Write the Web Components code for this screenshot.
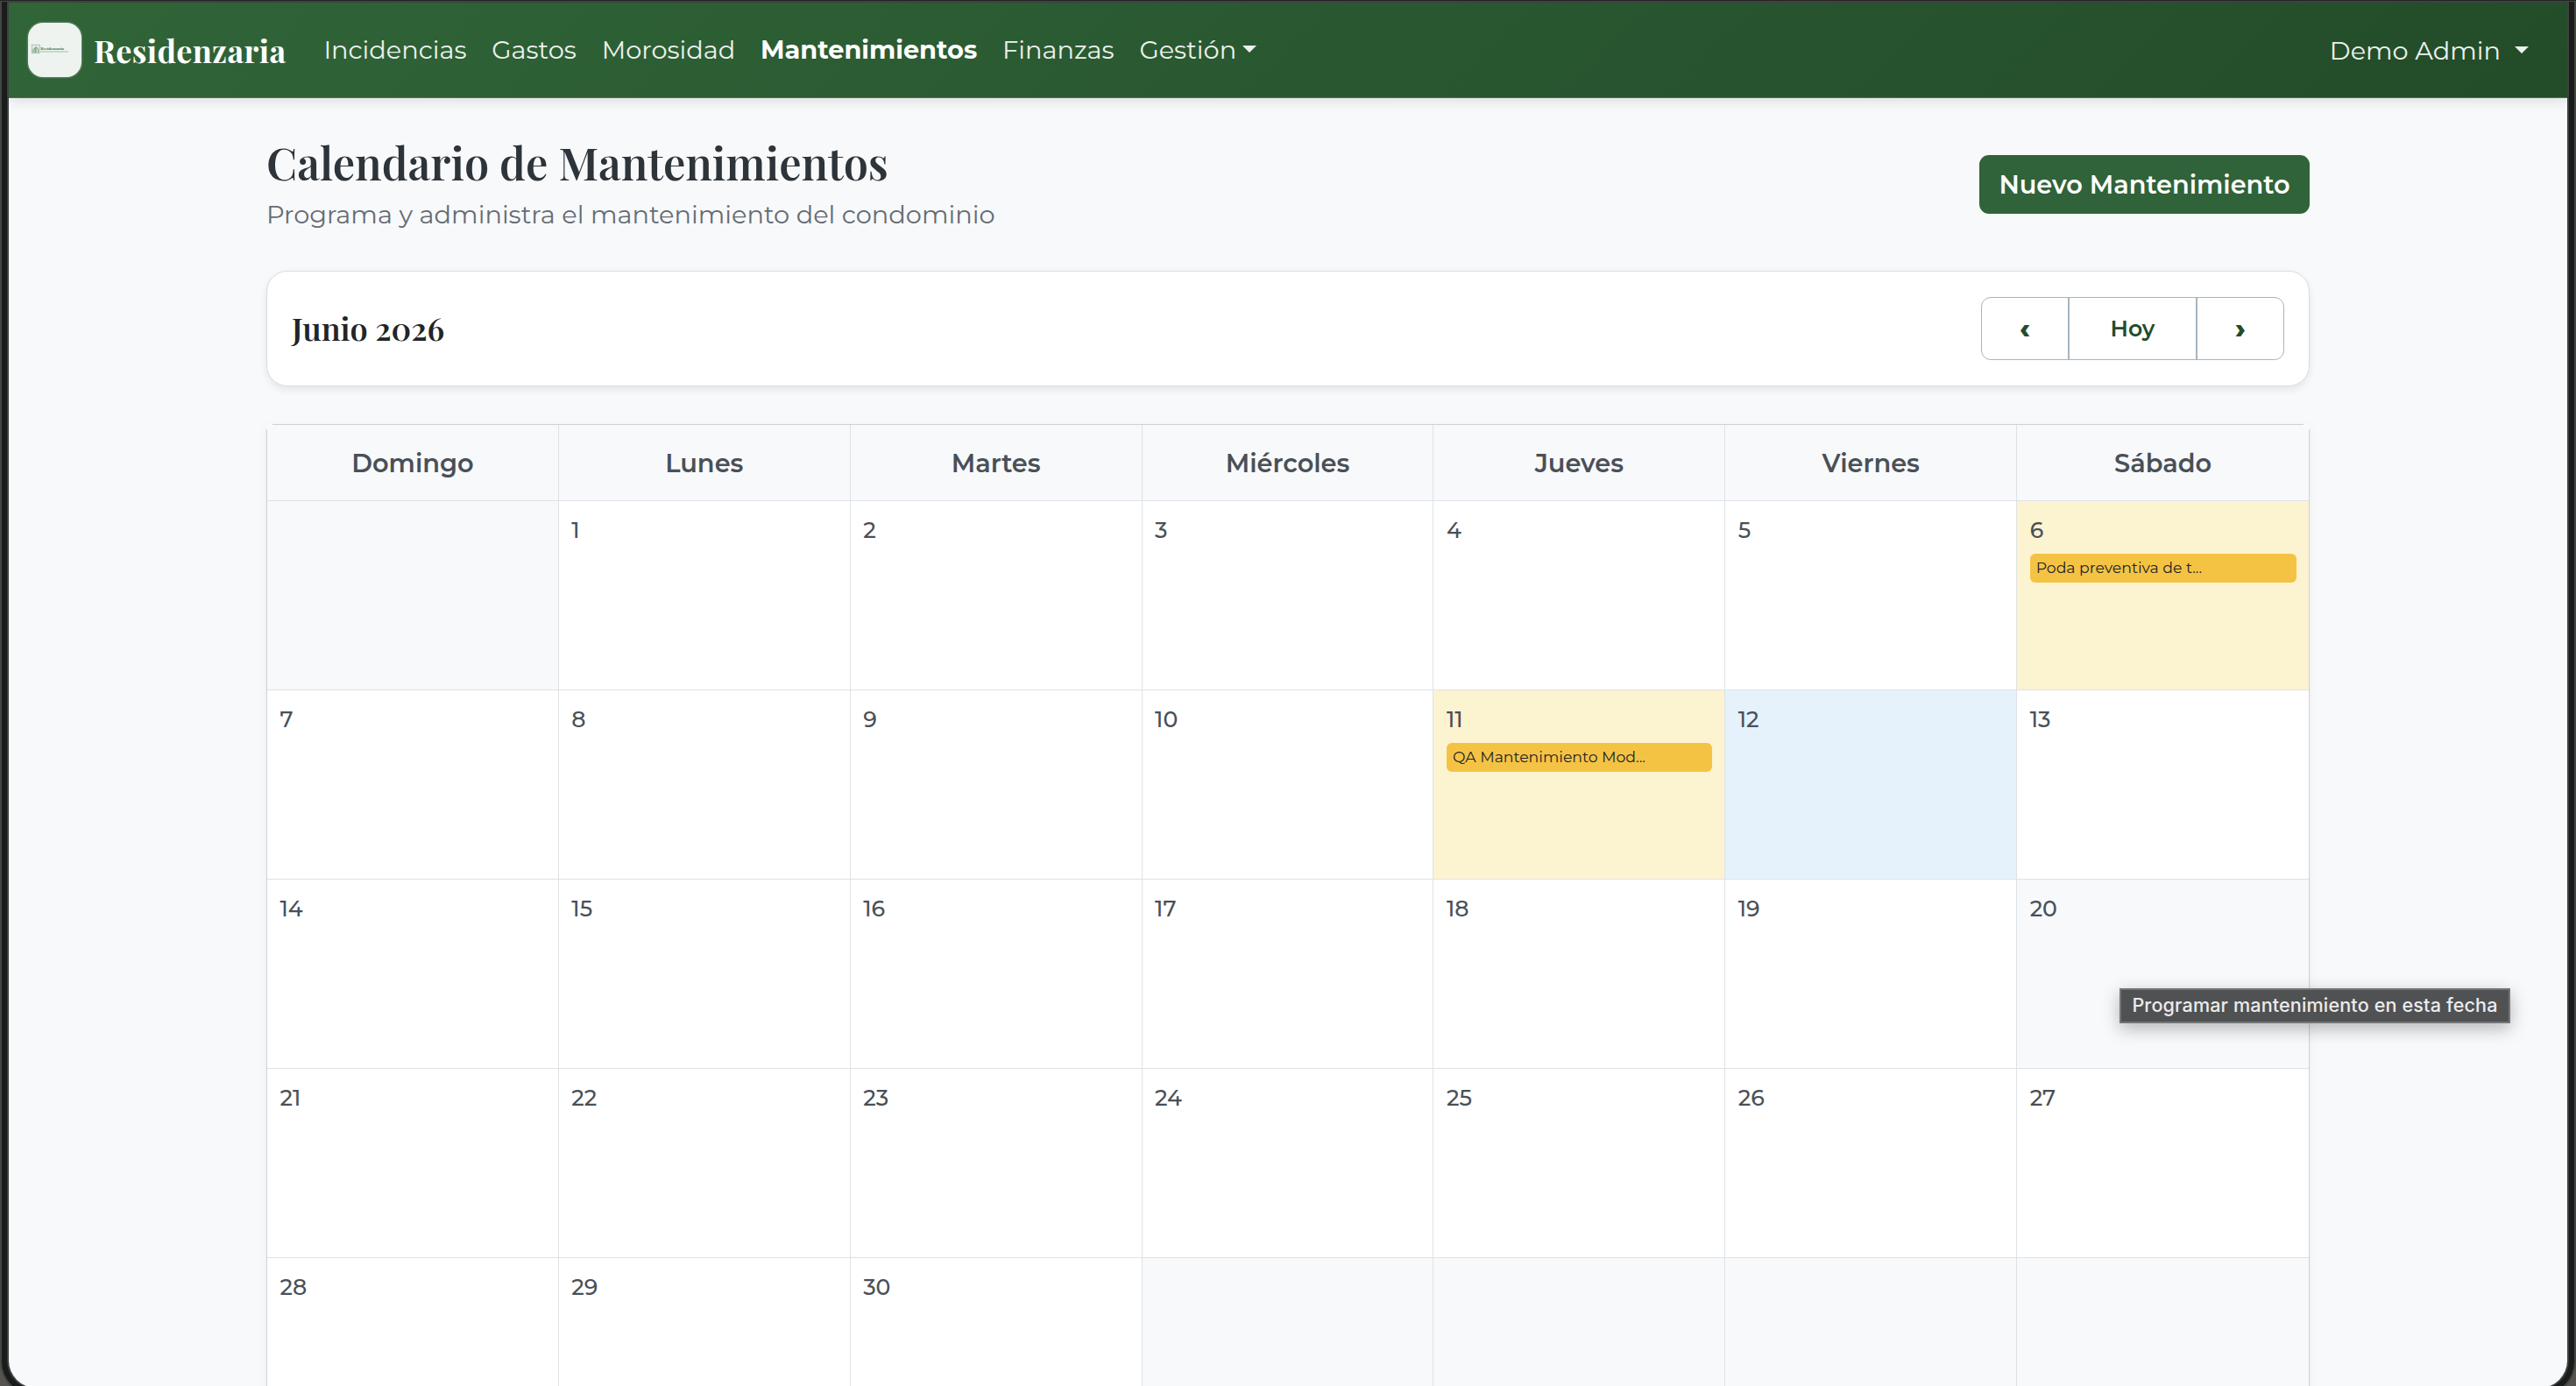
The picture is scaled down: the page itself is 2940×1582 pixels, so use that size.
<!DOCTYPE html>
<html lang="es">
<head>
<meta charset="UTF-8">
<title>Residenzaria - Calendario de Mantenimientos</title>
<style>
    html, body{
        margin: 0;
        height: 1582px;
        overflow: hidden;
        background-color: #55544f;
    }

    body{
        --serif: "Playfair Display", "Liberation Serif", serif;
        --sans: Montserrat, Inter, sans-serif;
        --green: #306339;
        --green-dark: #234c29;
        --line: #dee2e6;
        --page: #f8f9fb;

        font-family: var(--sans);
    }
</style>
</head>
<body>

<app-window>
    <nav-bar></nav-bar>

    <page-header>
        <span slot="title">Calendario de Mantenimientos</span>
        <span slot="subtitle">Programa y administra el mantenimiento del condominio</span>
        <span slot="action">Nuevo Mantenimiento</span>
    </page-header>

    <month-toolbar>Junio 2026</month-toolbar>

    <month-calendar></month-calendar>
</app-window>

<hover-tip>Programar mantenimiento en esta fecha</hover-tip>

<script>
const attachTemplate = (element, html) => {
    const template = document.createElement('template');
    template.innerHTML = html;

    const shadowRoot = element.attachShadow({mode: 'open'});
    shadowRoot.appendChild(template.content.cloneNode(true));

    return shadowRoot;
}

//browser window with dark frame
class AppWindow extends HTMLElement{
    constructor() {
        super();

        attachTemplate(this,
        `
        <style>
            :host{
                display: block;
                box-sizing: border-box;
                height: 1594px;
                padding: 1px 2px 2px;
                background-color: #444544;
                border-top: 1px solid #222;
                border-radius: 0 0 40px 40px;
            }

            .frame{
                height: 1590px;
                box-sizing: border-box;
                padding: 0 6px 6px;
                background-color: #1a1c1b;
                border-radius: 0 0 38px 38px;
            }

            .page{
                height: 1584px;
                box-sizing: border-box;
                border: 2px solid #3e403f;
                border-top-width: 1px;
                border-radius: 0 0 33px 33px;
                background-color: var(--page);
                overflow: hidden;
            }
        </style>

        <div class="frame">
            <div class="page"><slot></slot></div>
        </div>
        `);
    }
}

//top navigation
class NavBar extends HTMLElement{
    constructor() {
        super();

        attachTemplate(this,
        `
        <style>
            :host{
                display: flex;
                align-items: center;
                box-sizing: border-box;
                height: 109px;
                padding: 0 44px 0 22px;
                background-image: linear-gradient(135deg, #306538, #234c29);
                border-bottom: 1px solid #44734a;
                box-shadow: 0 3px 14px rgba(0, 0, 0, 0.12);
                color: #edf2ed;
                font-size: 28.8px;
                line-height: 36px;
            }

            .logo{
                width: 61px;
                height: 62px;
                border-radius: 17px;
                background-color: #eef3ef;
                box-shadow: 0 0 0 1.5px rgba(255, 255, 255, 0.15);
            }

            .brand{
                margin: 0 43px 0 14px;
                font: bold 36px/44px var(--serif);
                letter-spacing: 0.36px;
                color: white;
            }

            nav{
                display: flex;
                gap: 28.8px;
                flex: 1;
            }

            .active{
                font-weight: 700;
                color: white;
            }

            .drop{
                display: flex;
                align-items: center;
                gap: 7.3px;
            }

            .user{
                gap: 16px;
                margin-top: 1px;
            }

            .caret{
                border: 8px solid transparent;
                border-top-color: currentColor;
                border-bottom: 0;
                margin-top: -2px;
            }
        </style>

        <svg class="logo" viewBox="0 0 61 62">
            <rect x="4.3" y="25.2" width="9" height="9.5" fill="#e4ede6" stroke="#9dbaa3" stroke-width="0.8"/>
            <path d="M6 34V30.5L8 28.5V34M9 34V27.5L11.5 30V34" fill="none" stroke="#5d8b65" stroke-width="0.9"/>
            <text x="14.5" y="31.4" font-family="Liberation Serif, serif" font-weight="bold" font-size="4.9" textLength="26.5" lengthAdjust="spacingAndGlyphs" fill="#3f7549">Residenzaria</text>
            <path d="M14.5 33H46" stroke="#8fae95" stroke-width="0.8"/>
        </svg>
        <span class="brand">Residenzaria</span>

        <nav>
            <span>Incidencias</span>
            <span>Gastos</span>
            <span>Morosidad</span>
            <span class="active">Mantenimientos</span>
            <span>Finanzas</span>
            <span class="drop">Gestión<i class="caret"></i></span>
        </nav>

        <span class="drop user">Demo Admin<i class="caret"></i></span>
        `);
    }
}

//page title and main action
class PageHeader extends HTMLElement{
    constructor() {
        super();

        attachTemplate(this,
        `
        <style>
            :host{
                display: flex;
                justify-content: space-between;
                align-items: center;
                width: 2332px;
                margin: 43px auto 46px;
            }

            h1{
                margin: 0 0 12px;
                font: 600 50.4px/60px var(--serif);
                color: #2d343a;
            }

            p{
                margin: 0;
                font-size: 28.8px;
                line-height: 36px;
                color: #656c73;
            }

            button{
                width: 377px;
                height: 67px;
                margin-top: 3px;
                padding: 0;
                border: 0;
                border-radius: 11px;
                background-color: var(--green);
                color: white;
                font: 600 28.8px/36px var(--sans);
            }
        </style>

        <div>
            <h1><slot name="title"></slot></h1>
            <p><slot name="subtitle"></slot></p>
        </div>
        <button><slot name="action"></slot></button>
        `);
    }
}

//month name and month navigation
class MonthToolbar extends HTMLElement{
    constructor() {
        super();

        attachTemplate(this,
        `
        <style>
            :host{
                display: flex;
                justify-content: space-between;
                align-items: center;
                box-sizing: border-box;
                width: 2332px;
                height: 132px;
                margin: 0 auto 43px;
                padding: 0 28px;
                border: 1px solid #d9dfdd;
                border-radius: 24px;
                background-color: white;
                box-shadow: 0 4px 10px rgba(0, 0, 0, 0.08);
            }

            h2{
                margin: 0 0 2px;
                font: 600 36px/44px var(--serif);
                color: #212529;
            }

            .group{
                display: grid;
                grid-template-columns: 98px 148px 98px;
                box-sizing: border-box;
                height: 72px;
                border: 1px solid #a5b5c1;
                border-radius: 11px;
            }

            .group > span{
                display: flex;
                justify-content: center;
                align-items: center;
                font-size: 25.2px;
                font-weight: 600;
                color: var(--green-dark);
            }

            .group > .today{
                border: solid #a5b5c1;
                border-width: 0 2px;
            }

            .group > .arrow{
                padding-bottom: 2px;
                font-size: 33px;
                font-weight: 800;
            }
        </style>

        <h2><slot></slot></h2>
        <div class="group">
            <span class="arrow">‹</span>
            <span class="today">Hoy</span>
            <span class="arrow">›</span>
        </div>
        `);
    }
}

//one day of the month
class CalendarDay extends HTMLElement{
    constructor() {
        super();

        attachTemplate(this,
        `
        <style>
            :host{
                display: block;
                box-sizing: border-box;
                min-width: 0;
                padding: 18px 14.5px;
                border: solid var(--line);
                border-width: 0 1px 1px 0;
                background-color: white;
                font-size: 25.2px;
                font-weight: 500;
                line-height: 30px;
                color: #495057;
            }

            :host([state="empty"]), :host([state="hover"]){
                background-color: #f8f9fb;
            }

            :host([state="busy"]){
                background-color: #fcf3d1;
            }

            :host([state="today"]){
                background-color: #e5f2fb;
            }
        </style>

        <slot></slot>
        `);
    }
}

class CalendarEvent extends HTMLElement{
    constructor() {
        super();

        attachTemplate(this,
        `
        <style>
            :host{
                display: block;
                height: 33px;
                margin-top: 12px;
                padding-left: 7px;
                border-radius: 6px;
                background-color: #f5c344;
                font-size: 17.28px;
                font-weight: 400;
                line-height: 32px;
                color: #212529;
            }
        </style>

        <slot></slot>
        `);
    }
}

//month grid
class MonthCalendar extends HTMLElement{
    constructor() {
        super();

        const weekDays = ['Domingo', 'Lunes', 'Martes', 'Miércoles', 'Jueves', 'Viernes', 'Sábado'];
        const events = {6: 'Poda preventiva de t...', 11: 'QA Mantenimiento Mod...'};
        const states = {6: 'busy', 11: 'busy', 12: 'today', 20: 'hover'};

        const head = weekDays.map(name => `<div class="head">${name}</div>`).join('');

        let days = '';

        //june starts on monday
        for (let cell = 0; cell < 35; cell++) {
            if (cell < 1 || cell > 30) {
                days += '<calendar-day state="empty"></calendar-day>';
                continue;
            }

            const eventHtml = events[cell] ? `<calendar-event>${events[cell]}</calendar-event>` : '';

            days += `<calendar-day state="${states[cell] || ''}">${cell}${eventHtml}</calendar-day>`;
        }

        attachTemplate(this,
        `
        <style>
            :host{
                display: grid;
                grid-template-columns: repeat(7, 1fr);
                grid-template-rows: 87px;
                grid-auto-rows: 216px;
                position: relative;
                box-sizing: border-box;
                width: 2332px;
                margin: 0 auto;
                border: 1px solid #cfd1d4;
                box-shadow: 0 4px 10px rgba(0, 0, 0, 0.06);
            }

            /* rounded corners leave the outline open */
            :host::before, :host::after{
                content: "";
                position: absolute;
                top: -1px;
                width: 7px;
                height: 6px;
                background-color: var(--page);
            }

            :host::before{
                left: -1px;
            }

            :host::after{
                right: -1px;
            }

            .head{
                display: flex;
                justify-content: center;
                align-items: center;
                box-sizing: border-box;
                border: solid var(--line);
                border-width: 0 1px 1px 0;
                background-color: var(--page);
                font-size: 28.8px;
                font-weight: 600;
                color: #495057;
            }

            .head:nth-of-type(7), calendar-day:nth-of-type(7n){
                border-right: 0;
            }
        </style>

        ${head}${days}
        `);
    }
}

//native tooltip of the hovered day
class HoverTip extends HTMLElement{
    constructor() {
        super();

        attachTemplate(this,
        `
        <style>
            :host{
                position: absolute;
                left: 2419px;
                top: 1128px;
                box-sizing: border-box;
                width: 446px;
                height: 40px;
                border: 2px solid #747577;
                background-color: #505153;
                box-shadow: 0 6px 20px rgba(0, 0, 0, 0.28);
                font: 500 21.6px/35px Inter, sans-serif;
                letter-spacing: 0.13px;
                text-align: center;
                white-space: nowrap;
                color: #ebebec;
            }
        </style>

        <slot></slot>
        `);
    }
}

customElements.define("app-window", AppWindow);
customElements.define("nav-bar", NavBar);
customElements.define("page-header", PageHeader);
customElements.define("month-toolbar", MonthToolbar);
customElements.define("calendar-day", CalendarDay);
customElements.define("calendar-event", CalendarEvent);
customElements.define("month-calendar", MonthCalendar);
customElements.define("hover-tip", HoverTip);
</script>
</body>
</html>
